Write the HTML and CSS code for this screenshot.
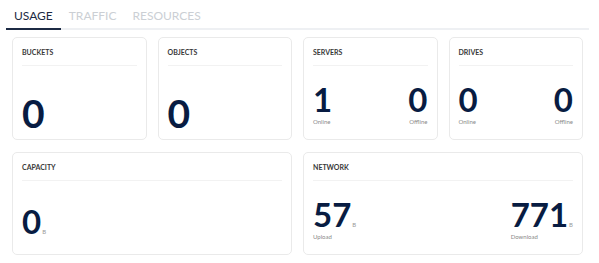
FILE: index.html
```html
<!DOCTYPE html>
<html lang="en">
<head>
    <meta charset="UTF-8">
    <meta name="viewport" content="width=device-width, initial-scale=1.0">
    <title>Dashboard</title>
    <link rel="stylesheet" href="styles.css">
</head>
<body>

<nav class="tabs">
    <div class="tab active">USAGE</div>
    <div class="tab">TRAFFIC</div>
    <div class="tab">RESOURCES</div>
</nav>

<div class="grid">
    <div class="card">
        <h3>BUCKETS</h3>
        <div class="card-body">
            <div class="big">0</div>
        </div>
    </div>

    <div class="card">
        <h3>OBJECTS</h3>
        <div class="card-body">
            <div class="big">0</div>
        </div>
    </div>

    <div class="card">
        <h3>SERVERS</h3>
        <div class="card-body split">
            <div class="stat">
                <div class="num">1</div>
                <div class="label">Online</div>
            </div>
            <div class="stat right">
                <div class="num">0</div>
                <div class="label">Offline</div>
            </div>
        </div>
    </div>

    <div class="card">
        <h3>DRIVES</h3>
        <div class="card-body split">
            <div class="stat">
                <div class="num">0</div>
                <div class="label">Online</div>
            </div>
            <div class="stat right">
                <div class="num">0</div>
                <div class="label">Offline</div>
            </div>
        </div>
    </div>

    <div class="card wide">
        <h3>CAPACITY</h3>
        <div class="card-body capacity">
            <div class="num">0<span class="unit">B</span></div>
        </div>
    </div>

    <div class="card wide">
        <h3>NETWORK</h3>
        <div class="card-body split">
            <div class="stat">
                <div class="num">57<span class="unit">B</span></div>
                <div class="label">Upload</div>
            </div>
            <div class="stat">
                <div class="num">771<span class="unit">B</span></div>
                <div class="label">Download</div>
            </div>
        </div>
    </div>
</div>

</body>
</html>
```

FILE: styles.css
```css
/* Basic Reset */
* {
    margin: 0;
    padding: 0;
    box-sizing: border-box;
}

body {
    font-family: 'Lato', 'Open Sans', sans-serif;
    background: #fff;
    color: #333;
}

.tabs {
    display: flex;
    margin: 5px 10px 0 6px;
    border-bottom: 2px solid #eef0f3;
}

.tab {
    font-size: 12px;
    padding: 3px 8px 5px;
    color: #cbcfd4;
    margin-bottom: -2px;
    border-bottom: 2px solid transparent;
}

.tab.active {
    color: #1c2a44;
    border-bottom-color: #1c2a44;
}

.grid {
    display: grid;
    grid-template-columns: repeat(4, 1fr);
    gap: 12px 11px;
    margin: 7px 16px 0 12px;
}

.card {
    height: 103px;
    border: 1px solid #eaeaea;
    border-radius: 5px;
    padding: 10px 9px 0;
    display: flex;
    flex-direction: column;
}

.card.wide {
    grid-column: span 2;
}

.card h3 {
    font-size: 7px;
    font-weight: 700;
    color: #393939;
    padding-bottom: 9px;
    border-bottom: 1px solid #f2f2f2;
}

.card-body {
    flex: 1;
    display: flex;
    align-items: flex-end;
}

.big {
    font-size: 39px;
    font-weight: 700;
    color: #081c42;
    line-height: 1;
    margin-bottom: 6px;
}

.split {
    justify-content: space-between;
    padding-bottom: 14px;
}

.stat .num,
.capacity .num {
    font-size: 33px;
    font-weight: 700;
    color: #081c42;
    line-height: 1;
}

.capacity {
    padding-bottom: 16px;
}

.stat.right {
    text-align: right;
}

.unit {
    font-size: 6px;
    font-weight: 400;
    color: #9a9a9a;
    margin-left: 1px;
}

.label {
    font-size: 6px;
    color: #8a8a8a;
    margin-top: 2px;
}
```
